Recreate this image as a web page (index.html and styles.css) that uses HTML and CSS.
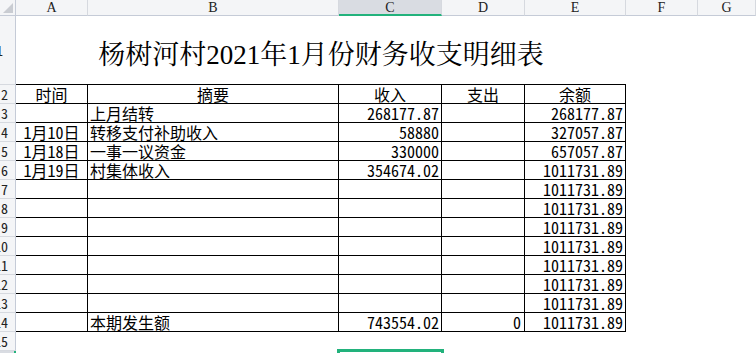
FILE: index.html
```html
<!DOCTYPE html>
<html lang="zh-CN">
<head>
<meta charset="utf-8">
<title>杨树河村2021年1月份财务收支明细表</title>
<link rel="stylesheet" href="styles.css">
</head>
<body>
<div class="sheet">
  <div class="corner"><svg width="15" height="15" viewBox="0 0 15 15"><polygon points="13,3 13,13 3,13" fill="#c9ccd2"/></svg></div>
  <div class="ch">A</div>
  <div class="ch">B</div>
  <div class="ch sel">C</div>
  <div class="ch">D</div>
  <div class="ch">E</div>
  <div class="ch">F</div>
  <div class="ch last">G</div>

  <div class="rh r1"><span>1</span></div>
  <div class="title">杨树河村2021年1月份财务收支明细表</div>
  <div></div><div></div>

  <div class="rh"><span>2</span></div>
  <div class="c a">时间</div><div class="c a">摘要</div><div class="c a">收入</div><div class="c a">支出</div><div class="c a">余额</div>
  <div></div><div></div>

  <div class="rh"><span>3</span></div>
  <div class="c a"></div><div class="c b">上月结转</div><div class="c n">268177.87</div><div class="c n"></div><div class="c n">268177.87</div>
  <div></div><div></div>

  <div class="rh"><span>4</span></div>
  <div class="c a">1月10日</div><div class="c b">转移支付补助收入</div><div class="c n">58880</div><div class="c n"></div><div class="c n">327057.87</div>
  <div></div><div></div>

  <div class="rh"><span>5</span></div>
  <div class="c a">1月18日</div><div class="c b">一事一议资金</div><div class="c n">330000</div><div class="c n"></div><div class="c n">657057.87</div>
  <div></div><div></div>

  <div class="rh"><span>6</span></div>
  <div class="c a">1月19日</div><div class="c b">村集体收入</div><div class="c n">354674.02</div><div class="c n"></div><div class="c n">1011731.89</div>
  <div></div><div></div>

  <div class="rh"><span>7</span></div>
  <div class="c a"></div><div class="c b"></div><div class="c n"></div><div class="c n"></div><div class="c n">1011731.89</div>
  <div></div><div></div>

  <div class="rh"><span>8</span></div>
  <div class="c a"></div><div class="c b"></div><div class="c n"></div><div class="c n"></div><div class="c n">1011731.89</div>
  <div></div><div></div>

  <div class="rh"><span>9</span></div>
  <div class="c a"></div><div class="c b"></div><div class="c n"></div><div class="c n"></div><div class="c n">1011731.89</div>
  <div></div><div></div>

  <div class="rh"><span>10</span></div>
  <div class="c a"></div><div class="c b"></div><div class="c n"></div><div class="c n"></div><div class="c n">1011731.89</div>
  <div></div><div></div>

  <div class="rh"><span>11</span></div>
  <div class="c a"></div><div class="c b"></div><div class="c n"></div><div class="c n"></div><div class="c n">1011731.89</div>
  <div></div><div></div>

  <div class="rh"><span>12</span></div>
  <div class="c a"></div><div class="c b"></div><div class="c n"></div><div class="c n"></div><div class="c n">1011731.89</div>
  <div></div><div></div>

  <div class="rh"><span>13</span></div>
  <div class="c a"></div><div class="c b"></div><div class="c n"></div><div class="c n"></div><div class="c n">1011731.89</div>
  <div></div><div></div>

  <div class="rh"><span>14</span></div>
  <div class="c a"></div><div class="c b">本期发生额</div><div class="c n">743554.02</div><div class="c n zero">0</div><div class="c n">1011731.89</div>
  <div></div><div></div>

  <div class="rh"><span>15</span></div>
  <div></div><div></div><div></div><div></div><div></div><div></div><div></div>

  <div class="rh rsel"><span>16</span></div>
  <div></div><div></div><div></div><div></div><div></div><div></div><div></div>
</div>
<div class="selection"></div>
</body>
</html>
```

FILE: styles.css
```css
html, body {
  margin: 0;
  padding: 0;
}
body {
  width: 756px;
  height: 353px;
  overflow: hidden;
  position: relative;
  background: #ffffff;
  color: #000;
  font-family: "Noto Sans Mono CJK SC", "Noto Sans CJK SC", "DejaVu Sans Mono", monospace;
}
.sheet {
  display: grid;
  grid-template-columns: 16px 72px 251px 103px 83px 101px 72px 1fr;
  grid-template-rows: 16px 69px repeat(13, 19px) 19px 19px;
  height: 353px;
  overflow: hidden;
}
.sheet > div {
  box-sizing: border-box;
  min-width: 0;
}
.corner {
  background: #f4f5f7;
  border-right: 1px solid #c5cbd7;
  border-bottom: 1px solid #c5cbd7;
}
.corner svg {
  display: block;
}
.ch {
  background: #f4f5f7;
  border-right: 1px solid #d6d9df;
  border-bottom: 1px solid #c5cbd7;
  text-align: center;
  font-family: "Liberation Serif", serif;
  font-size: 14px;
  line-height: 15px;
  color: #222;
}
.ch.sel {
  background: #d9dce2;
  border-bottom: 2px solid #22b27c;
}
.rh {
  background: #f4f5f7;
  border-right: 1px solid #c5cbd7;
  border-bottom: 1px solid #d6d9df;
  display: flex;
  align-items: center;
  justify-content: flex-end;
  padding-right: 7px;
  overflow: hidden;
  white-space: nowrap;
  font-family: "Noto Sans Mono CJK SC", "DejaVu Sans Mono", monospace;
  font-size: 14px;
  line-height: 18px;
  color: #222;
}
.rh span {
  flex: none;
}
.rh.r1 {
  padding-right: 12px;
}
.rh.rsel {
  background: #d9dce2;
  border-right: 2px solid #22b27c;
  align-items: flex-start;
}
.title {
  grid-column: 2 / 7;
  border-bottom: 1px solid #000;
  display: flex;
  align-items: center;
  justify-content: center;
  padding-top: 4px;
  font-family: "Liberation Serif", "Noto Serif CJK SC", "Noto Sans CJK SC", serif;
  font-size: 27px;
  white-space: nowrap;
}
.c {
  border-right: 1px solid #000;
  border-bottom: 1px solid #000;
  font-size: 16px;
  line-height: 18px;
  white-space: nowrap;
  overflow: hidden;
}
.c.a {
  text-align: center;
}
.c.b {
  text-align: left;
  padding-left: 2px;
}
.c.n {
  text-align: right;
  padding-right: 2px;
}
.c.zero {
  padding-right: 3px;
}
.selection {
  position: absolute;
  left: 337px;
  top: 349px;
  width: 107px;
  height: 22px;
  border: 3px solid #22b27c;
  box-sizing: border-box;
}
```
